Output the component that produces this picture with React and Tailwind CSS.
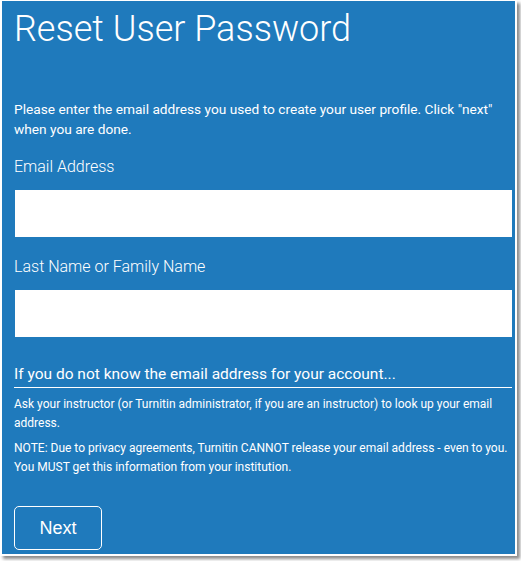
export default function App() {
  return (
    <div className="w-[521px] h-[561px] bg-white" style={{ fontFamily: 'Roboto, "Liberation Sans", sans-serif' }}>
      <div className="w-[517px] h-[556px] bg-white pl-[2px] pt-[1px] pr-[2px] pb-[2px] shadow-[3px_3px_3px_rgba(0,0,0,0.45)]">
        <div className="h-full bg-[#1f7abc] text-white pl-[12px] pr-[3px] flex flex-col">
          <h1 className="text-[36px] font-light leading-none mt-[10px]">Reset User Password</h1>

          <p className="text-[13.7px] leading-[20px] mt-[52px] pr-[10px]">
            Please enter the email address you used to create your user profile. Click "next" when you are done.
          </p>

          <label className="text-[16px] font-light leading-[20px] mt-[18px]">Email Address</label>
          <input type="text" className="mt-[13px] h-[47px] bg-white ml-[1px] outline-none text-black px-2" />

          <label className="text-[16px] font-light leading-[20px] mt-[20px]">Last Name or Family Name</label>
          <input type="text" className="mt-[13px] h-[47px] bg-white ml-[1px] outline-none text-black px-2" />

          <h2 className="text-[15.5px] leading-[20px] mt-[27px] pb-[3px] border-b border-white">
            If you do not know the email address for your account...
          </h2>

          <p className="text-[12px] leading-[19px] mt-[7px] pr-[6px]">
            Ask your instructor (or Turnitin administrator, if you are an instructor) to look up your email address.
          </p>
          <p className="text-[12px] leading-[19px] mt-[6px] pr-[4px]">
            NOTE: Due to privacy agreements, Turnitin CANNOT release your email address - even to you. You MUST get this information from your institution.
          </p>

          <div className="mt-[29px]">
            <button
              className="w-[88px] h-[44px] border-[1.5px] border-white rounded-[5px] text-[18px] font-normal text-white"
              style={{ fontFamily: '"Liberation Sans", Arial, sans-serif' }}
            >
              Next
            </button>
          </div>
        </div>
      </div>
    </div>
  );
}
